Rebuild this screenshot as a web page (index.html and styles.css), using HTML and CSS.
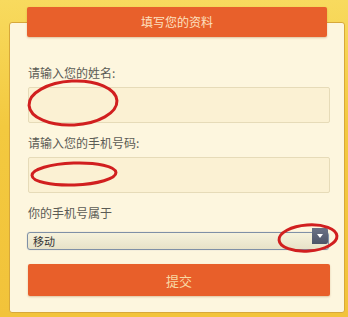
FILE: index.html
```html
<!DOCTYPE html>
<html lang="zh-CN">
<head>
    <meta charset="UTF-8">
    <meta name="viewport" content="width=device-width, initial-scale=1.0">
    <title>填写您的资料</title>
    <link rel="stylesheet" href="styles.css">
</head>
<body>
    <div class="card">
        <div class="card-title">填写您的资料</div>

        <!-- Name -->
        <label class="field-label first" for="name">请输入您的姓名:</label>
        <input type="text" id="name" class="text-input">

        <!-- Phone -->
        <label class="field-label" for="phone">请输入您的手机号码:</label>
        <input type="text" id="phone" class="text-input">

        <!-- Carrier -->
        <label class="field-label" for="carrier">你的手机号属于</label>
        <div class="select-wrap">
            <select id="carrier" class="carrier-select">
                <option>移动</option>
                <option>联通</option>
                <option>电信</option>
            </select>
            <span class="select-arrow"></span>
        </div>

        <button class="submit-btn">提交</button>
    </div>

    <!-- red hand-drawn marks over the form -->
    <svg class="marks" width="348" height="317" viewBox="0 0 348 317">
        <ellipse cx="73" cy="103" rx="44" ry="22" transform="rotate(-3 73 103)"/>
        <ellipse cx="74" cy="174" rx="42" ry="11" transform="rotate(-2 74 174)"/>
        <ellipse cx="308" cy="238" rx="29" ry="13" transform="rotate(-4 308 238)"/>
    </svg>
</body>
</html>
```

FILE: styles.css
```css
body {
    margin: 0;
    width: 348px;
    height: 317px;
    overflow: hidden;
    position: relative;
    font-family: "Noto Sans CJK SC", "Noto Sans", sans-serif;
    background: linear-gradient(180deg, #f8da5e 0%, #f3c93f 40%, #f2c33a 100%);
}
.card {
    margin: 22px 3px 0 9px;
    padding: 0 17px 16px 17px;
    background-color: #fdf6de;
    border: 1px solid #d7a83a;
    border-radius: 3px;
}
.card-title {
    margin-top: -16px;
    height: 30px;
    line-height: 30px;
    background-color: #e8602b;
    color: #fde0c0;
    text-align: center;
    font-size: 12px;
    border-radius: 2px;
    box-shadow: 0 1px 2px rgba(150, 80, 20, 0.3);
}
.field-label {
    display: block;
    margin: 12px 0 6px 1px;
    font-size: 12px;
    line-height: 16px;
    color: #5b5b55;
}
.field-label.first {
    margin-top: 28px;
}
.text-input {
    display: block;
    box-sizing: border-box;
    width: 302px;
    height: 36px;
    margin: 0 0 0 1px;
    padding: 0 6px;
    background-color: #fbf1d3;
    border: 1px solid #e6dbb8;
    border-radius: 2px;
    outline: none;
}
.select-wrap {
    position: relative;
    width: 302px;
    height: 18px;
}
.carrier-select {
    appearance: none;
    -webkit-appearance: none;
    box-sizing: border-box;
    width: 100%;
    height: 18px;
    margin: 0;
    padding: 0 0 0 5px;
    font-family: "Noto Sans CJK SC", sans-serif;
    font-size: 11px;
    color: #333;
    background: linear-gradient(180deg, #f6f2dc 0%, #e7e2c8 100%);
    border: 1px solid #7f90a6;
    border-radius: 3px;
    box-shadow: 0 0 1px #9fb0c4;
}
.select-arrow {
    position: absolute;
    right: 1px;
    top: 1px;
    width: 16px;
    height: 16px;
    background: linear-gradient(180deg, #6a7286 0%, #4e5568 100%);
    border-radius: 0 2px 2px 0;
}
.select-arrow::after {
    content: "";
    position: absolute;
    left: 5px;
    top: 6px;
    border-left: 3px solid transparent;
    border-right: 3px solid transparent;
    border-top: 4px solid #fff;
}
.submit-btn {
    display: block;
    width: 302px;
    height: 32px;
    margin: 19px 0 0 1px;
    padding: 0;
    font-family: "Noto Sans CJK SC", sans-serif;
    font-size: 13px;
    color: #f8d9a4;
    background-color: #e85f2a;
    border: none;
    border-radius: 2px;
    box-shadow: 0 1px 2px rgba(150, 80, 20, 0.3);
}
.marks {
    position: absolute;
    left: 0;
    top: 0;
    pointer-events: none;
}
.marks ellipse {
    fill: none;
    stroke: #d11f1f;
    stroke-width: 3;
}
```
